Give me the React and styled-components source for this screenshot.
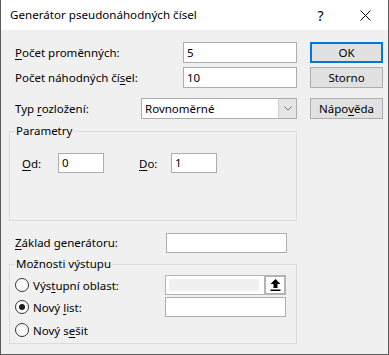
import React from 'react';
import styled, { createGlobalStyle } from 'styled-components';

const GlobalStyle = createGlobalStyle`
  html, body {
    margin: 0;
    padding: 0;
    background: #f0f0f0;
  }
  body {
    font-family: "Noto Sans", "Segoe UI", sans-serif;
    font-size: 11.5px;
    color: #000;
  }
`;

const Window = styled.div`
  width: 389px;
  height: 355px;
  box-sizing: border-box;
  border: 1px solid #5b5b5b;
  border-top: none;
  background: #f0f0f0;
  display: flex;
  flex-direction: column;
`;

const TitleBar = styled.div`
  height: 30px;
  flex: none;
  background: #fff;
  display: flex;
  align-items: center;
  padding-left: 9px;
`;

const Title = styled.div`
  flex: 1;
  font-size: 11.6px;
  line-height: 16px;
`;

const TitleButton = styled.div`
  width: 45px;
  height: 30px;
  display: flex;
  align-items: center;
  justify-content: center;
  font-size: 14px;
`;

const Body = styled.div`
  display: grid;
  grid-template-columns: 288px 73px;
  column-gap: 13px;
  padding: 12px 5px 0 8px;
  align-items: start;
`;

const Form = styled.div`
  display: flex;
  flex-direction: column;
`;

const Row = styled.div`
  display: flex;
  align-items: center;
  height: 21px;
  padding-left: ${p => p.$indent || 6}px;
  margin-top: ${p => p.$gap || 0}px;
`;

const Label = styled.span`
  flex: 1;
  white-space: nowrap;
`;

const U = styled.span`
  text-decoration: underline;
  text-underline-offset: 2px;
`;

const TextBox = styled.div`
  box-sizing: border-box;
  width: ${p => p.$w}px;
  height: ${p => p.$h || 21}px;
  margin-right: ${p => p.$mr || 0}px;
  background: #fff;
  border: 1px solid #adadad;
  padding: 0 3px;
  display: flex;
  align-items: center;
  line-height: 16px;
`;

const Select = styled.div`
  box-sizing: border-box;
  width: 156px;
  height: 21px;
  background: #fff;
  border: 1px solid #adadad;
  display: flex;
  align-items: stretch;
`;

const SelectValue = styled.div`
  flex: 1;
  padding-left: 3px;
  display: flex;
  align-items: center;
`;

const SelectArrow = styled.div`
  width: 17px;
  background: #e5e5e5;
  border-left: 1px solid #d0d0d0;
  display: flex;
  align-items: center;
  justify-content: center;
`;

const Group = styled.fieldset`
  margin: ${p => p.$top}px 0 0 0;
  padding: 0;
  border: 1px solid #dcdcdc;
  height: ${p => p.$h}px;
  box-sizing: border-box;
  min-width: 0;
`;

const Legend = styled.legend`
  margin-left: 5px;
  padding: 0 1px;
  line-height: 16px;
  color: #000;
`;

const ParamRow = styled.div`
  display: flex;
  align-items: center;
  height: 20px;
  margin-top: 14px;
  padding-left: 12px;
`;

const ParamLabel = styled.span`
  width: ${p => p.$w}px;
`;

const RadioRow = styled.div`
  display: flex;
  align-items: center;
  height: 20px;
  margin-top: ${p => p.$gap || 0}px;
  padding-left: 5px;
`;

const Radio = styled.span`
  box-sizing: border-box;
  width: 14px;
  height: 14px;
  border-radius: 50%;
  border: 1px solid #333;
  background: #fff;
  display: flex;
  align-items: center;
  justify-content: center;
  margin-right: 4px;
  flex: none;

  &::after {
    content: '';
    width: 6px;
    height: 6px;
    border-radius: 50%;
    background: #1a1a1a;
    display: ${p => (p.$checked ? 'block' : 'none')};
  }
`;

const RangeBox = styled.div`
  box-sizing: border-box;
  width: 121px;
  height: 20px;
  margin-right: 10px;
  background: #fff;
  border: 1px solid #b4b4b4;
  display: flex;
  align-items: center;
  padding: 0 0 0 3px;
  gap: 5px;
`;

const RangeField = styled.div`
  flex: 1;
  height: 12px;
  background: #f0f0f0;
`;

const RangeButton = styled.div`
  box-sizing: border-box;
  width: 22px;
  height: 20px;
  margin-right: -1px;
  border: 2px solid #b4b4b4;
  background: #fff;
  display: flex;
  align-items: center;
  justify-content: center;
`;

const Buttons = styled.div`
  display: flex;
  flex-direction: column;
`;

const Button = styled.div`
  box-sizing: border-box;
  height: 21px;
  margin-top: ${p => p.$gap || 0}px;
  background: #e1e1e1;
  border: ${p => (p.$default ? '2px solid #0078d7' : '1px solid #adadad')};
  display: flex;
  align-items: center;
  justify-content: center;
`;

const CloseIcon = () => (
  <svg width="11" height="11" viewBox="0 0 11 11">
    <path d="M0.5 0.5 L10.5 10.5 M10.5 0.5 L0.5 10.5" stroke="#000" strokeWidth="1" fill="none" />
  </svg>
);

const Chevron = () => (
  <svg width="8" height="5" viewBox="0 0 8 5">
    <path d="M0.5 0.5 L4 4 L7.5 0.5" stroke="#707070" strokeWidth="1" fill="none" />
  </svg>
);

const UpArrow = () => (
  <svg width="11" height="12" viewBox="0 0 11 12">
    <path d="M5.5 0 L10.5 5 L7.5 5 L7.5 9 L3.5 9 L3.5 5 L0.5 5 Z" fill="#000" />
    <rect x="0.5" y="10.5" width="10" height="1.5" fill="#000" />
  </svg>
);

export default function App() {
  return (
    <>
      <GlobalStyle />
      <Window>
        <TitleBar>
          <Title>Generátor pseudonáhodných čísel</Title>
          <TitleButton>?</TitleButton>
          <TitleButton><CloseIcon /></TitleButton>
        </TitleBar>

        <Body>
          <Form>
            <Row>
              <Label><U>P</U>očet proměnných:</Label>
              <TextBox $w={114}>5</TextBox>
            </Row>
            <Row $gap={4}>
              <Label>Počet náhodných čí<U>s</U>el:</Label>
              <TextBox $w={114}>10</TextBox>
            </Row>
            <Row $gap={10}>
              <Label>Typ <U>r</U>ozložení:</Label>
              <Select>
                <SelectValue>Rovnoměrné</SelectValue>
                <SelectArrow><Chevron /></SelectArrow>
              </Select>
            </Row>

            <Group $top={4} $h={98}>
              <Legend>Parametry</Legend>
              <ParamRow>
                <ParamLabel $w={36}><U>O</U>d:</ParamLabel>
                <TextBox $w={46} $h={20}>0</TextBox>
                <ParamLabel $w={35} />
                <ParamLabel $w={32}><U>D</U>o:</ParamLabel>
                <TextBox $w={46} $h={20}>1</TextBox>
              </ParamRow>
            </Group>

            <Row $gap={11} $indent={6}>
              <Label><U>Z</U>áklad generátoru:</Label>
              <TextBox $w={121} $h={20} $mr={10} />
            </Row>

            <Group $top={3} $h={88}>
              <Legend>Možnosti výstupu</Legend>
              <RadioRow $gap={3}>
                <Radio />
                <Label>Výs<U>t</U>upní oblast:</Label>
                <RangeBox>
                  <RangeField />
                  <RangeButton><UpArrow /></RangeButton>
                </RangeBox>
              </RadioRow>
              <RadioRow $gap={2}>
                <Radio $checked />
                <Label>Nový <U>l</U>ist:</Label>
                <TextBox $w={121} $h={20} $mr={10} />
              </RadioRow>
              <RadioRow $gap={3}>
                <Radio />
                <Label>Nový s<U>e</U>šit</Label>
              </RadioRow>
            </Group>
          </Form>

          <Buttons>
            <Button $default>OK</Button>
            <Button $gap={4}>Storno</Button>
            <Button $gap={10}>Nápo<U>v</U>ěda</Button>
          </Buttons>
        </Body>
      </Window>
    </>
  );
}
